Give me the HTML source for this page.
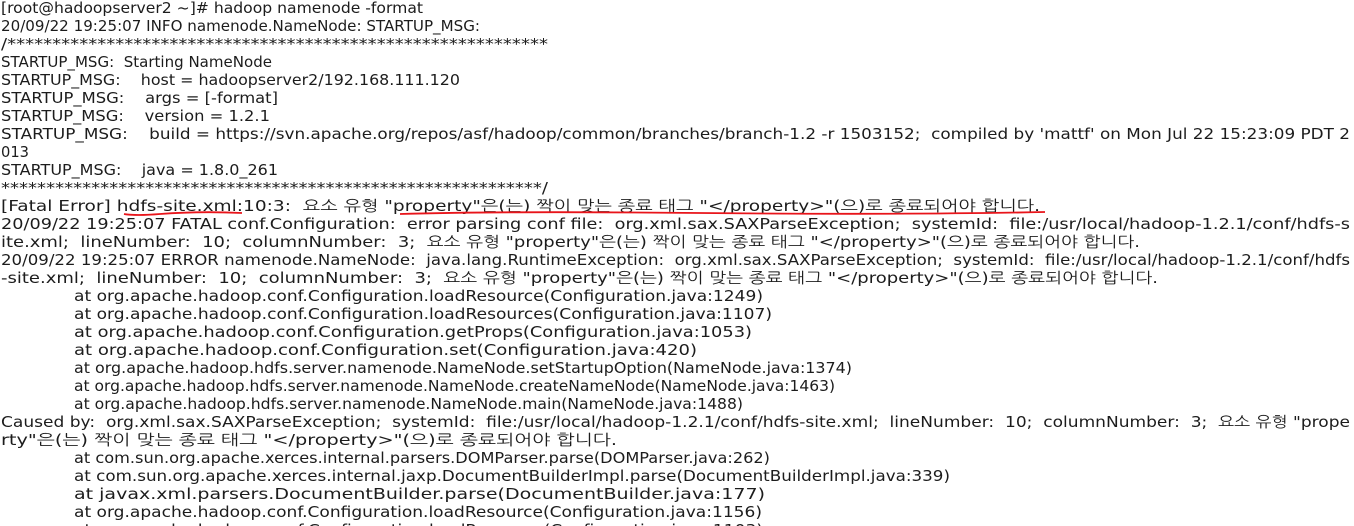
<!DOCTYPE html>
<html><head><meta charset="utf-8"><style>
html,body{margin:0;padding:0;background:#fff;width:1354px;height:526px;overflow:hidden}
svg{display:block}
text{font-family:"DejaVu Sans","NanumGothic","Noto Sans CJK KR",sans-serif;font-size:15px;fill:#1c1c1c;white-space:pre}
</style></head><body>
<svg width="1354" height="526" xmlns="http://www.w3.org/2000/svg" xml:space="preserve">
<text x="1" y="13" textLength="422" lengthAdjust="spacingAndGlyphs">[root@hadoopserver2 ~]# hadoop namenode -format</text>
<text x="1" y="31" textLength="479" lengthAdjust="spacingAndGlyphs">20/09/22 19:25:07 INFO namenode.NameNode: STARTUP_MSG:</text>
<text x="1" y="49" textLength="547" lengthAdjust="spacingAndGlyphs">/************************************************************</text>
<text x="1" y="67" textLength="271" lengthAdjust="spacingAndGlyphs">STARTUP_MSG:  Starting NameNode</text>
<text x="1" y="85" textLength="459" lengthAdjust="spacingAndGlyphs">STARTUP_MSG:    host = hadoopserver2/192.168.111.120</text>
<text x="1" y="103" textLength="277" lengthAdjust="spacingAndGlyphs">STARTUP_MSG:    args = [-format]</text>
<text x="1" y="121" textLength="269" lengthAdjust="spacingAndGlyphs">STARTUP_MSG:    version = 1.2.1</text>
<text x="1" y="139" textLength="1349" lengthAdjust="spacingAndGlyphs">STARTUP_MSG:    build = https://svn.apache.org/repos/asf/hadoop/common/branches/branch-1.2 -r 1503152;  compiled by 'mattf' on Mon Jul 22 15:23:09 PDT 2</text>
<text x="1" y="157" textLength="28" lengthAdjust="spacingAndGlyphs">013</text>
<text x="1" y="175" textLength="277" lengthAdjust="spacingAndGlyphs">STARTUP_MSG:    java = 1.8.0_261</text>
<text x="1" y="193" textLength="547" lengthAdjust="spacingAndGlyphs">************************************************************/</text>
<text x="1" y="211" textLength="1039" lengthAdjust="spacingAndGlyphs">[Fatal Error] hdfs-site.xml:10:3:  요소 유형 "property"은(는) 짝이 맞는 종료 태그 "&lt;/property&gt;"(으)로 종료되어야 합니다.</text>
<text x="1" y="229" textLength="1349" lengthAdjust="spacingAndGlyphs">20/09/22 19:25:07 FATAL conf.Configuration:  error parsing conf file:  org.xml.sax.SAXParseException;  systemId:  file:/usr/local/hadoop-1.2.1/conf/hdfs-s</text>
<text x="1" y="247" textLength="1139" lengthAdjust="spacingAndGlyphs">ite.xml;  lineNumber:  10;  columnNumber:  3;  요소 유형 "property"은(는) 짝이 맞는 종료 태그 "&lt;/property&gt;"(으)로 종료되어야 합니다.</text>
<text x="1" y="265" textLength="1349" lengthAdjust="spacingAndGlyphs">20/09/22 19:25:07 ERROR namenode.NameNode:  java.lang.RuntimeException:  org.xml.sax.SAXParseException;  systemId:  file:/usr/local/hadoop-1.2.1/conf/hdfs</text>
<text x="1" y="283" textLength="1157" lengthAdjust="spacingAndGlyphs">-site.xml;  lineNumber:  10;  columnNumber:  3;  요소 유형 "property"은(는) 짝이 맞는 종료 태그 "&lt;/property&gt;"(으)로 종료되어야 합니다.</text>
<text x="74" y="301" textLength="689" lengthAdjust="spacingAndGlyphs">at org.apache.hadoop.conf.Configuration.loadResource(Configuration.java:1249)</text>
<text x="74" y="319" textLength="698" lengthAdjust="spacingAndGlyphs">at org.apache.hadoop.conf.Configuration.loadResources(Configuration.java:1107)</text>
<text x="74" y="337" textLength="678" lengthAdjust="spacingAndGlyphs">at org.apache.hadoop.conf.Configuration.getProps(Configuration.java:1053)</text>
<text x="74" y="355" textLength="623" lengthAdjust="spacingAndGlyphs">at org.apache.hadoop.conf.Configuration.set(Configuration.java:420)</text>
<text x="74" y="373" textLength="778" lengthAdjust="spacingAndGlyphs">at org.apache.hadoop.hdfs.server.namenode.NameNode.setStartupOption(NameNode.java:1374)</text>
<text x="74" y="391" textLength="761" lengthAdjust="spacingAndGlyphs">at org.apache.hadoop.hdfs.server.namenode.NameNode.createNameNode(NameNode.java:1463)</text>
<text x="74" y="409" textLength="669" lengthAdjust="spacingAndGlyphs">at org.apache.hadoop.hdfs.server.namenode.NameNode.main(NameNode.java:1488)</text>
<text x="1" y="427" textLength="1349" lengthAdjust="spacingAndGlyphs">Caused by:  org.xml.sax.SAXParseException;  systemId:  file:/usr/local/hadoop-1.2.1/conf/hdfs-site.xml;  lineNumber:  10;  columnNumber:  3;  요소 유형 "prope</text>
<text x="1" y="445" textLength="616" lengthAdjust="spacingAndGlyphs">rty"은(는) 짝이 맞는 종료 태그 "&lt;/property&gt;"(으)로 종료되어야 합니다.</text>
<text x="74" y="463" textLength="696" lengthAdjust="spacingAndGlyphs">at com.sun.org.apache.xerces.internal.parsers.DOMParser.parse(DOMParser.java:262)</text>
<text x="74" y="481" textLength="876" lengthAdjust="spacingAndGlyphs">at com.sun.org.apache.xerces.internal.jaxp.DocumentBuilderImpl.parse(DocumentBuilderImpl.java:339)</text>
<text x="74" y="499" textLength="691" lengthAdjust="spacingAndGlyphs">at javax.xml.parsers.DocumentBuilder.parse(DocumentBuilder.java:177)</text>
<text x="74" y="517" textLength="688" lengthAdjust="spacingAndGlyphs">at org.apache.hadoop.conf.Configuration.loadResource(Configuration.java:1156)</text>
<text x="74" y="535" textLength="689" lengthAdjust="spacingAndGlyphs">at org.apache.hadoop.conf.Configuration.loadResource(Configuration.java:1103)</text>
<path d="M124 214 Q135 216 160 214 Q200 211 242 213" stroke="#e8141a" stroke-width="1.8" fill="none"/>
<path d="M400 214 Q500 211 700 213 Q900 215 1045 212" stroke="#e8141a" stroke-width="1.8" fill="none"/>
</svg>
</body></html>
